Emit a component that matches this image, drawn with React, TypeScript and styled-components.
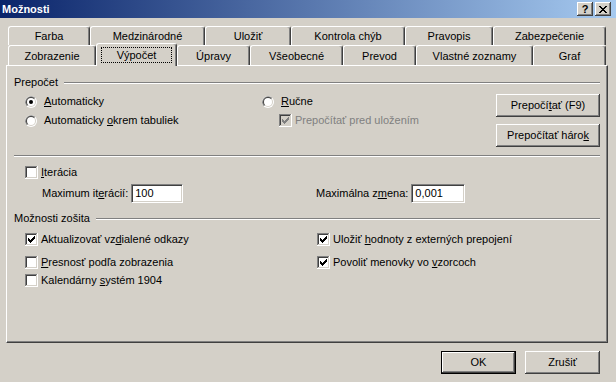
import React from 'react';
import styled, { createGlobalStyle } from 'styled-components';

const face = '#d4d0c8';
const shadow = '#808080';
const dark = '#404040';

const GlobalStyle = createGlobalStyle`
  html, body {
    margin: 0;
    padding: 0;
    background: ${face};
  }
  body {
    font-family: 'Liberation Sans', Arial, sans-serif;
    font-size: 11px;
    color: #000;
  }
  * {
    box-sizing: border-box;
  }
`;

const Window = styled.div`
  width: 616px;
  height: 382px;
  background: ${face};
  display: flex;
  flex-direction: column;
  overflow: hidden;
  font-family: 'Liberation Sans', Arial, sans-serif;
  font-size: 11px;
  line-height: 13px;
`;

const TitleBar = styled.div`
  height: 18px;
  flex: none;
  display: flex;
  align-items: center;
  justify-content: space-between;
  padding: 0 5px 0 2px;
  background: linear-gradient(to right, #0a246a, #a6caf0);
  color: #fff;
  font-weight: bold;
`;

const TitleButtons = styled.div`
  display: flex;
  gap: 2px;
`;

const TitleButton = styled.div`
  width: 16px;
  height: 14px;
  background: ${face};
  display: flex;
  align-items: center;
  justify-content: center;
  color: #000;
  font-weight: bold;
  font-size: 11px;
  box-shadow: inset -1px -1px ${dark}, inset 1px 1px #fff, inset -2px -2px ${shadow};
`;

const Body = styled.div`
  flex: none;
  padding: 8px 8px 0 6px;
  display: flex;
  flex-direction: column;
`;

const TabStrip = styled.div`
  display: flex;
  flex-direction: column;
  padding-left: 2px;
`;

const TabRow = styled.div<{ $h: number }>`
  display: flex;
  align-items: flex-start;
  height: ${p => p.$h}px;
`;

const Tab = styled.div<{ $w: number; $h: number; $active?: boolean }>`
  flex: none;
  width: ${p => p.$w}px;
  height: ${p => (p.$active ? p.$h + 3 : p.$h)}px;
  margin-top: ${p => (p.$active ? -2 : 0)}px;
  position: ${p => (p.$active ? 'relative' : 'static')};
  z-index: ${p => (p.$active ? 2 : 'auto')};
  background: ${face};
  border-top: 1px solid #fff;
  border-left: 1px solid #fff;
  border-right: 1px solid ${dark};
  border-radius: 3px 3px 0 0;
  box-shadow: inset -1px 0 ${shadow};
  display: flex;
  align-items: ${p => (p.$active ? 'flex-start' : 'center')};
  justify-content: center;
  padding-top: ${p => (p.$active ? 3 : 1)}px;
  white-space: nowrap;
`;

const FocusRect = styled.span`
  width: calc(100% - 8px);
  height: 16px;
  border: 1px dotted #000;
  display: flex;
  align-items: center;
  justify-content: center;
`;

const Panel = styled.div`
  width: 602px;
  height: 278px;
  flex: none;
  border-top: 1px solid #fff;
  border-left: 1px solid #fff;
  border-right: 1px solid ${dark};
  border-bottom: 1px solid ${dark};
  box-shadow: inset -1px -1px ${shadow};
  padding: 0 7px;
  display: flex;
  flex-direction: column;
`;

const GroupHeader = styled.div<{ $mt: number }>`
  display: flex;
  align-items: center;
  height: 13px;
  margin-top: ${p => p.$mt}px;
`;

const EtchedLine = styled.div<{ $mt?: number; $ml?: number }>`
  flex: 1;
  height: 2px;
  margin-top: ${p => p.$mt ?? 0}px;
  margin-left: ${p => p.$ml ?? 0}px;
  border-top: 1px solid ${shadow};
  border-bottom: 1px solid #fff;
`;

const Separator = styled(EtchedLine)`
  flex: none;
`;

const CalcSection = styled.div`
  display: grid;
  grid-template-columns: 237px 1fr 104px;
  margin-top: 3px;
  padding-left: 11px;
`;

const Column = styled.div<{ $pt?: number; $gap?: number; $pl?: number }>`
  display: flex;
  flex-direction: column;
  padding-top: ${p => p.$pt ?? 0}px;
  padding-left: ${p => p.$pl ?? 0}px;
  gap: ${p => p.$gap ?? 0}px;
`;

const Option = styled.div<{ $h?: number; $mt?: number; $disabled?: boolean; $indent?: number }>`
  display: flex;
  align-items: center;
  gap: 3px;
  height: ${p => p.$h ?? 13}px;
  margin-top: ${p => p.$mt ?? 0}px;
  padding-left: ${p => p.$indent ?? 0}px;
  color: ${p => (p.$disabled ? shadow : '#000')};
  white-space: nowrap;
`;

const RadioGap = styled.span`
  width: 1px;
`;

const Key = styled.span`
  text-decoration: underline;
`;

const PushButton = styled.div<{ $w: number; $default?: boolean }>`
  width: ${p => p.$w}px;
  height: 23px;
  background: ${face};
  display: flex;
  align-items: center;
  justify-content: center;
  border: ${p => (p.$default ? '1px solid #000' : 'none')};
  box-shadow: inset -1px -1px ${dark}, inset 1px 1px #fff, inset -2px -2px ${shadow};
  white-space: nowrap;
`;

const FieldRow = styled.div`
  display: flex;
  align-items: center;
  height: 19px;
  margin-top: 5px;
  padding-left: 28px;
`;

const Field = styled.div<{ $w?: number }>`
  display: flex;
  align-items: center;
  gap: 3px;
  width: ${p => (p.$w ? `${p.$w}px` : 'auto')};
  white-space: nowrap;
`;

const TextBox = styled.div<{ $w: number }>`
  width: ${p => p.$w}px;
  height: 19px;
  background: #fff;
  border-top: 1px solid ${shadow};
  border-left: 1px solid ${shadow};
  border-bottom: 1px solid #fff;
  border-right: 1px solid #fff;
  box-shadow: inset 1px 1px ${dark}, inset -1px -1px ${face};
  padding-left: 3px;
  display: flex;
  align-items: center;
`;

const OptionsGrid = styled.div`
  display: grid;
  grid-template-columns: 292px 1fr;
  margin-top: 8px;
  padding-left: 11px;
`;

const Footer = styled.div`
  display: flex;
  justify-content: flex-end;
  gap: 9px;
  padding: 8px 8px 0 0;
`;

const CheckBox = ({ checked, disabled }: { checked?: boolean; disabled?: boolean }) => (
  <svg width="13" height="13" viewBox="0 0 13 13" shapeRendering="crispEdges" style={{ flex: 'none' }}>
    <rect x="0" y="0" width="13" height="13" fill="#fff" />
    <path d="M0 0h12v1H1v11H0z" fill={shadow} />
    <path d="M1 1h10v1H2v9H1z" fill={dark} />
    <path d="M11 1h1v11H1v-1h10z" fill={face} />
    <rect x="2" y="2" width="9" height="9" fill={disabled ? face : '#fff'} />
    {checked && (
      <path
        d="M3 5h1v3H3zM4 6h1v3H4zM5 7h1v3H5zM6 6h1v3H6zM7 5h1v3H7zM8 4h1v3H8zM9 3h1v3H9z"
        fill={disabled ? shadow : '#000'}
      />
    )}
  </svg>
);

const Radio = ({ checked }: { checked?: boolean }) => (
  <svg width="12" height="12" viewBox="0 0 12 12" style={{ flex: 'none' }}>
    <circle cx="6" cy="6" r="6" fill="#fff" />
    <path d="M1.76 10.24A6 6 0 0 1 10.24 1.76Z" fill={shadow} />
    <circle cx="6" cy="6" r="5" fill={face} />
    <path d="M2.46 9.54A5 5 0 0 1 9.54 2.46Z" fill={dark} />
    <circle cx="6" cy="6" r="4" fill="#fff" />
    {checked && <circle cx="6" cy="6" r="2" fill="#000" />}
  </svg>
);

const CloseGlyph = () => (
  <svg width="8" height="7" viewBox="0 0 8 7" shapeRendering="crispEdges">
    <path
      d="M0 0h2v1H0zM6 0h2v1H6zM1 1h2v1H1zM5 1h2v1H5zM2 2h4v1H2zM3 3h2v1H3zM2 4h4v1H2zM1 5h2v1H1zM5 5h2v1H5zM0 6h2v1H0zM6 6h2v1H6z"
      fill="#000"
    />
  </svg>
);

const backTabs = [
  { label: 'Farba', w: 82 },
  { label: 'Medzinárodné', w: 115 },
  { label: 'Uložiť', w: 86 },
  { label: 'Kontrola chýb', w: 114 },
  { label: 'Pravopis', w: 88 },
  { label: 'Zabezpečenie', w: 113 },
];

const frontTabs = [
  { label: 'Zobrazenie', w: 88 },
  { label: 'Výpočet', w: 81, active: true },
  { label: 'Úpravy', w: 73 },
  { label: 'Všeobecné', w: 93 },
  { label: 'Prevod', w: 73 },
  { label: 'Vlastné zoznamy', w: 117 },
  { label: 'Graf', w: 73 },
];

const App = () => {
  return (
    <>
      <GlobalStyle />
      <Window>
        <TitleBar>
          <span>Možnosti</span>
          <TitleButtons>
            <TitleButton>?</TitleButton>
            <TitleButton>
              <CloseGlyph />
            </TitleButton>
          </TitleButtons>
        </TitleBar>

        <Body>
          <TabStrip>
            <TabRow $h={19}>
              {backTabs.map(t => (
                <Tab key={t.label} $w={t.w} $h={19}>
                  {t.label}
                </Tab>
              ))}
            </TabRow>
            <TabRow $h={20}>
              {frontTabs.map(t => (
                <Tab key={t.label} $w={t.w} $h={20} $active={t.active}>
                  {t.active ? <FocusRect>{t.label}</FocusRect> : t.label}
                </Tab>
              ))}
            </TabRow>
          </TabStrip>

          <Panel>
            <GroupHeader $mt={10}>
              <span>Prepočet</span>
              <EtchedLine $ml={6} />
            </GroupHeader>

            <CalcSection>
              <Column>
                <Option $h={19}>
                  <Radio checked />
                  <RadioGap />
                  <span><Key>A</Key>utomaticky</span>
                </Option>
                <Option $h={19}>
                  <Radio />
                  <RadioGap />
                  <span>Automaticky <Key>o</Key>krem tabuliek</span>
                </Option>
              </Column>
              <Column>
                <Option $h={19}>
                  <Radio />
                  <RadioGap />
                  <span><Key>R</Key>učne</span>
                </Option>
                <Option $h={19} $indent={17} $disabled>
                  <CheckBox checked disabled />
                  <span>Prepočítať pred uložením</span>
                </Option>
              </Column>
              <Column $pt={2} $gap={7}>
                <PushButton $w={104}>
                  <span>Prepočí<Key>t</Key>ať (F9)</span>
                </PushButton>
                <PushButton $w={104}>
                  <span>Prepočítať háro<Key>k</Key></span>
                </PushButton>
              </Column>
            </CalcSection>

            <Separator $mt={8} />

            <Column $pl={11}>
              <Option $mt={9}>
                <CheckBox />
                <span><Key>I</Key>terácia</span>
              </Option>
            </Column>

            <FieldRow>
              <Field $w={274}>
                <span>Maximum it<Key>e</Key>rácií:</span>
                <TextBox $w={52}>100</TextBox>
              </Field>
              <Field>
                <span>Maximálna z<Key>m</Key>ena:</span>
                <TextBox $w={54}>0,001</TextBox>
              </Field>
            </FieldRow>

            <GroupHeader $mt={9}>
              <span>Možnosti zošita</span>
              <EtchedLine $ml={6} />
            </GroupHeader>

            <OptionsGrid>
              <Column>
                <Option>
                  <CheckBox checked />
                  <span>Aktualizovať vz<Key>d</Key>ialené odkazy</span>
                </Option>
                <Option $mt={10}>
                  <CheckBox />
                  <span><Key>P</Key>resnosť podľa zobrazenia</span>
                </Option>
                <Option $mt={5}>
                  <CheckBox />
                  <span>Kalendárny <Key>s</Key>ystém 1904</span>
                </Option>
              </Column>
              <Column>
                <Option>
                  <CheckBox checked />
                  <span>Uložiť <Key>h</Key>odnoty z externých prepojení</span>
                </Option>
                <Option $mt={10}>
                  <CheckBox checked />
                  <span>Povoliť menovky vo <Key>v</Key>zorcoch</span>
                </Option>
              </Column>
            </OptionsGrid>
          </Panel>

          <Footer>
            <PushButton $w={75} $default>OK</PushButton>
            <PushButton $w={75}>Zrušiť</PushButton>
          </Footer>
        </Body>
      </Window>
    </>
  );
};

export default App;
